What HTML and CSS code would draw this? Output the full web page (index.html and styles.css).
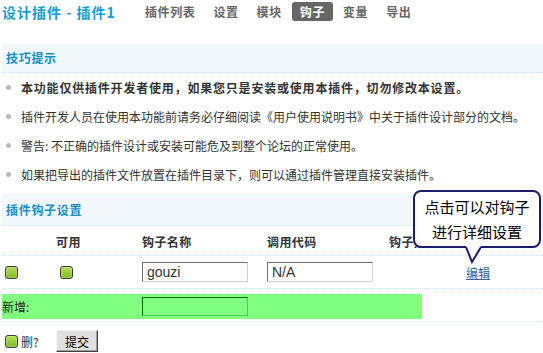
FILE: index.html
```html
<!DOCTYPE html>
<html lang="zh-CN">
<head>
<meta charset="utf-8">
<title>设计插件 - 插件1</title>
<link rel="stylesheet" href="styles.css">
</head>
<body>
<div class="page">
  <div class="topbar">
    <h3 class="title">设计插件 - 插件1</h3>
    <ul class="tabs">
      <li>插件列表</li>
      <li>设置</li>
      <li>模块</li>
      <li class="current">钩子</li>
      <li>变量</li>
      <li>导出</li>
    </ul>
  </div>

  <div class="tips">
    <div class="sec-head">技巧提示</div>
    <ul class="tiplist">
      <li class="strong">本功能仅供插件开发者使用，如果您只是安装或使用本插件，切勿修改本设置。</li>
      <li>插件开发人员在使用本功能前请务必仔细阅读《用户使用说明书》中关于插件设计部分的文档。</li>
      <li>警告: 不正确的插件设计或安装可能危及到整个论坛的正常使用。</li>
      <li>如果把导出的插件文件放置在插件目录下，则可以通过插件管理直接安装插件。</li>
    </ul>
  </div>

  <div class="hooks">
    <div class="sec-head tall">插件钩子设置</div>
    <div class="row head">
      <div></div>
      <div>可用</div>
      <div>钩子名称</div>
      <div>调用代码</div>
      <div>钩子描述</div>
      <div></div>
    </div>
    <div class="row data">
      <div class="c1"><span class="chk"></span></div>
      <div class="c2"><span class="chk"></span></div>
      <div><input class="txt" type="text" value="gouzi"></div>
      <div><input class="txt" type="text" value="N/A"></div>
      <div></div>
      <div><a class="edit" href="#">编辑</a></div>
    </div>
    <div class="row newrow">
      <div class="green">
        <span class="newlabel">新增:</span>
        <input class="txt greentxt" type="text" value="">
      </div>
    </div>
    <div class="submit-row">
      <span class="chk"></span>
      <span class="del">删?</span>
      <button class="btn" type="button">提交</button>
    </div>
  </div>

  <div class="bubble">点击可以对钩子<br>进行详细设置</div>
  <svg class="tail" width="22" height="22" viewBox="0 0 22 22">
    <path d="M4 0 H19 V2 L10 16 L4 2 Z" fill="#fff"/>
    <path d="M4 1 L10 16 L19 1" fill="none" stroke="#1c1c6b" stroke-width="2"/>
  </svg>
</div>
</body>
</html>
```

FILE: styles.css
```css
* { box-sizing: border-box; }
html, body { margin: 0; padding: 0; background: #fff; }
body {
  font: 12px "Noto Sans CJK SC", "DejaVu Sans", sans-serif;
  color: #333;
  width: 543px;
  height: 353px;
  overflow: hidden;
}
.page {
  position: relative;
  padding-left: 2px;
  height: 353px;
}

/* top bar */
.topbar {
  display: flex;
  align-items: center;
  height: 23px;
}
.title {
  margin: 0;
  flex: 0 0 135px;
  font-size: 14px;
  font-weight: bold;
  color: #139cd6;
  line-height: 20px;
  letter-spacing: 1px;
}
.tabs {
  display: flex;
  gap: 2px;
  list-style: none;
  margin: 0;
  padding: 0;
}
.tabs li {
  padding: 0 8px;
  height: 19px;
  line-height: 19px;
  font-weight: bold;
  color: #666;
  border-radius: 3px;
  letter-spacing: 0.6px;
}
.tabs li.current {
  background: #666;
  color: #fff;
}

/* section headings */
.tips { margin-top: 21px; }
.sec-head {
  background: #f2f9fd;
  height: 29px;
  line-height: 28px;
  border-bottom: 1px dotted #c8e3f6;
  padding-left: 4px;
  font-weight: bold;
  color: #1a8dc8;
  letter-spacing: 0.7px;
}
.sec-head.tall {
  height: 32px;
  line-height: 31px;
}

/* tips list */
.tiplist {
  list-style: none;
  margin: 0;
  padding: 0;
}
.tiplist li {
  position: relative;
  height: 29px;
  line-height: 29px;
  padding-left: 19px;
  white-space: nowrap;
}
.tiplist li::before {
  content: "";
  position: absolute;
  left: 4px;
  top: 12px;
  width: 5px;
  height: 5px;
  border-radius: 50%;
  background: #b8b8b8;
}
.tiplist li.strong {
  font-weight: bold;
  letter-spacing: 0.8px;
}

/* hooks table */
.hooks { margin-top: 5px; }
.row {
  display: grid;
  grid-template-columns: 54px 86px 125px 122px 77px 1fr;
  align-items: center;
  border-bottom: 1px dotted #c8e3f6;
}
.row.head {
  height: 30px;
  padding-top: 1px;
  font-weight: bold;
  letter-spacing: 0.4px;
}
.row.data { height: 33px; }
.c1 { padding-left: 3px; display: flex; }
.c2 { padding-left: 4px; display: flex; }

.chk {
  display: inline-block;
  width: 13px;
  height: 13px;
  border: 1px solid #3a3a3a;
  border-radius: 3px;
  background: linear-gradient(#b2e055, #7dbb20);
  box-shadow: inset 0 0 0 1px rgba(255,255,255,0.25);
}

.txt {
  display: block;
  width: 106px;
  height: 20px;
  margin: 0;
  padding: 0 4px;
  border: 1px solid;
  border-color: #707070 #d0d0d0 #d0d0d0 #707070;
  background: #fff;
  font: 14px "Liberation Sans", Arial, sans-serif;
  color: #333;
  outline: none;
}
.edit {
  color: #2a62a8;
  text-decoration: underline;
}

.row.newrow {
  display: block;
  height: 33px;
  padding: 5px 0 2px;
}
.green {
  width: 420px;
  height: 25px;
  background: #80ff80;
  display: grid;
  grid-template-columns: 140px 106px;
  align-items: center;
}
.newlabel { color: #222; }
.greentxt {
  height: 19px;
  background: #80ff80;
  border-color: #006400 #55c455 #55c455 #006400;
}

.submit-row {
  display: flex;
  align-items: center;
  margin-top: 8px;
  padding-left: 3px;
  height: 22px;
}
.del {
  margin-left: 3px;
  width: 35px;
  color: #333;
}
.btn {
  width: 42px;
  height: 22px;
  margin: 0;
  padding: 0;
  font: 12px "Noto Sans CJK SC", sans-serif;
  color: #000;
  background: #e0e0e0;
  border: 1px solid;
  border-color: #f4f4f4 #404040 #404040 #f4f4f4;
  box-shadow: inset -1px -1px 0 #a0a0a0;
}

/* tooltip bubble */
.bubble {
  position: absolute;
  left: 413px;
  top: 190px;
  width: 128px;
  height: 58px;
  border: 2px solid #1c1c6b;
  border-radius: 8px;
  background: #fff;
  padding-top: 2px;
  text-align: center;
  font-size: 15px;
  line-height: 25px;
  color: #000;
  z-index: 2;
}
.tail {
  position: absolute;
  left: 462px;
  top: 246px;
  z-index: 3;
}
```
